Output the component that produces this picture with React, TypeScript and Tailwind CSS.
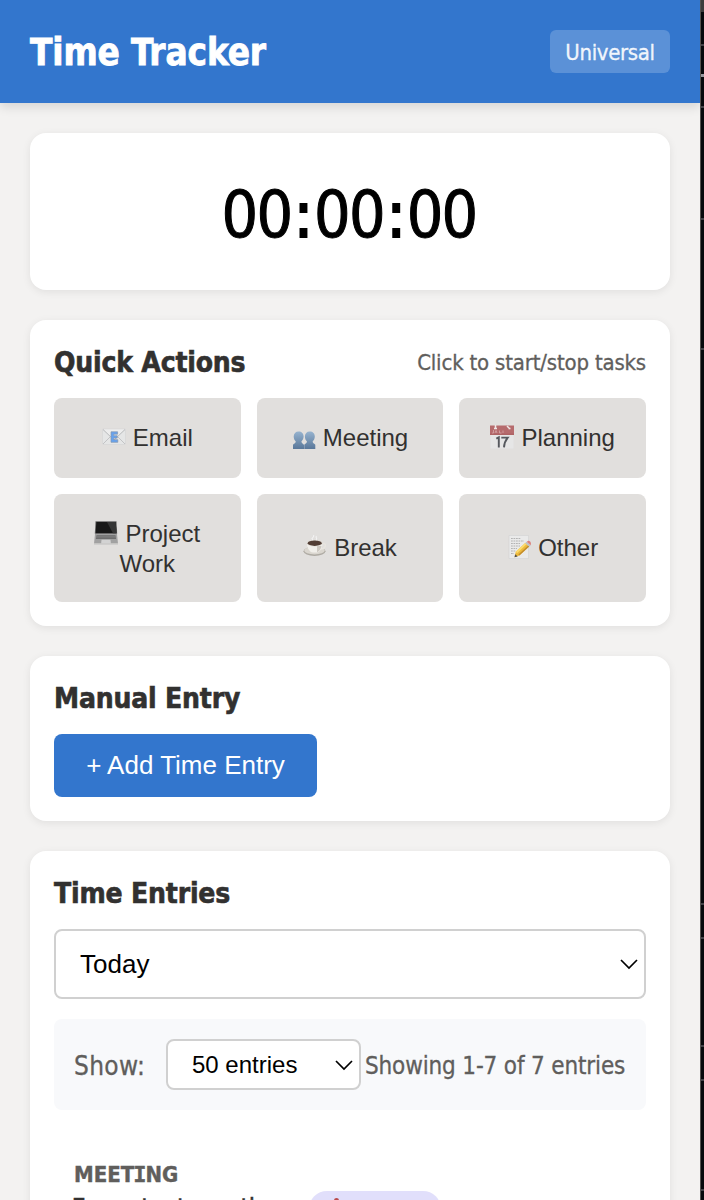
import React from "react";

const UI = "font-['DejaVu_Sans_Condensed','DejaVu_Sans',sans-serif] [font-stretch:condensed]";
const ARIAL = "font-['Liberation_Sans',sans-serif]";

function EmailIcon() {
  return (
    <svg width="24" height="24" viewBox="0 0 24 24">
      <rect x="0.5" y="4" width="23" height="15.5" rx="1" fill="#e6e7e8" stroke="#d3d4d5" strokeWidth=".6" />
      <path d="M1 19 9 11M23 19l-8-8" stroke="#bfc1c3" strokeWidth="1" />
      <path d="M1 4.500 12 15 23 4.500" fill="#efefef" stroke="#b3b5b7" strokeWidth="1" />
      <path d="M9 6.800h6.600v2.400h-3.800v1.500h3.400v2.400h-3.400v1.600h4v2.600H9z" fill="#5a9cf0" stroke="#7d8fa8" strokeWidth=".7" />
    </svg>
  );
}

function PeopleIcon() {
  return (
    <svg width="24" height="24" viewBox="0 0 24 24">
      <defs>
        <linearGradient id="people" x1="0" y1="0" x2="0" y2="1">
          <stop offset="0" stopColor="#8fafce" />
          <stop offset="1" stopColor="#4a6c92" />
        </linearGradient>
      </defs>
      <path
        d="M6.600 6.500c3 0 5 2 5 5 0 2.300-1.200 3.800-2.200 5 .2 2 1.900 2.400 2.600 3.300V24H1v-4.200c.7-1.100 2.500-1.300 2.800-3.300-1.200-1.200-2.100-2.700-2.100-5 0-3 1.900-5 4.900-5zM17.800 6.500c3 0 5 2 5 5 0 2.300-1 3.800-2.200 5 .2 2 2 2.200 2.700 3.300V24H12.300v-4.200c.7-1.100 2.400-1.300 2.700-3.300-1.200-1.200-2.100-2.700-2.100-5 0-3 1.900-5 4.900-5z"
        fill="url(#people)"
      />
    </svg>
  );
}

function CalendarIcon() {
  return (
    <svg width="24" height="24" viewBox="0 0 24 24">
      <path d="M.5 9h23v14.500H.5z" fill="#e7e7e8" />
      <path d="M0 .5h24V10H0z" fill="#b25f61" />
      <path d="M0 9.200h24" stroke="#a55355" strokeWidth="1" />
      <path d="M5.500 0v4M4 3.500h3M17 1l3 3M18.500 3.500h2" stroke="#f3e9e9" strokeWidth="1.500" />
      <path d="M3.500 5v3H2M5 8l1-2.500L7 8M9.500 5.500V8h2M13 5.500V8" stroke="#d6a2a3" strokeWidth=".8" fill="none" />
      <path d="m6.300 13.700 2.500-1.300v10M11.300 12.600h6.400c-2.400 3-3.500 6-3.700 9.800" fill="none" stroke="#484b51" strokeWidth="1.900" />
    </svg>
  );
}

function LaptopIcon() {
  return (
    <svg width="24" height="24" viewBox="0 0 24 24">
      <path d="M1.500.3h21l.7 12.500H.8z" fill="#585858" />
      <path d="M2.300 1h19.500l.6 11.300H1.700z" fill="#030303" />
      <path d="M13 1h8.800l.6 11.300h-3.500z" fill="#232323" />
      <path d="M1 13h22l1 9.500H0z" fill="#9b9b9b" />
      <path d="M2.500 14.300h19l.6 3.600H1.900z" fill="#5c5c5c" />
      <path d="M2.300 15.500h19.400M2.100 16.800h19.800" stroke="#888" strokeWidth=".5" />
      <path d="M7.500 18.700h9l.4 4H7.100z" fill="#d2d2d2" />
      <path d="M0 22.600h24v1H0z" fill="#c4c4c4" />
    </svg>
  );
}

function CoffeeIcon() {
  return (
    <svg width="24" height="24" viewBox="0 0 24 24">
      <ellipse cx="11.500" cy="16.300" rx="11" ry="4.700" fill="#a9a59d" />
      <ellipse cx="11.500" cy="15.500" rx="10.300" ry="3.900" fill="#dad6ce" />
      <path d="M19 8.500c5-1 4.500 5-1 5.600" fill="none" stroke="#e9e6e0" strokeWidth="1.500" />
      <path d="M4 8.200h15.500c0 5.500-3 8.800-5.500 9.300H9.500C7 17 4 13.500 4 8.200z" fill="#f3f1ec" />
      <path d="M14 11h4.500c-.5 3-2 5-4.500 6.300z" fill="#cbc6be" />
      <ellipse cx="11.700" cy="8.200" rx="7.900" ry="3.300" fill="#dedad3" />
      <ellipse cx="11.700" cy="8.200" rx="7" ry="2.700" fill="#432c22" />
      <path d="M10 5c-3-2 2-2.500.5-5M13 5c2-2-1-2 .5-4" fill="none" stroke="#f5f5f5" strokeWidth="1.100" />
    </svg>
  );
}

function MemoIcon() {
  return (
    <svg width="24" height="24" viewBox="0 0 24 24">
      <path d="M2 .5h19.500v23H2z" fill="#ececec" stroke="#d2d2d2" strokeWidth=".6" />
      <path
        d="M4 3.500h10M4 6h13M4 8.500h9M4 11h9M4 13.500h6M4 16h5M4 18.500h3"
        stroke="#a9a9a9"
        strokeWidth=".9"
        strokeDasharray="1.800 .7"
      />
      <path d="m7.500 22.300 1.300-5.500L18.200 8l4 3.500-9.800 9z" fill="#efb72b" />
      <path d="m8.800 16.800 9.400-8.800 1.300 1.200-9.500 9z" fill="#ffdb62" />
      <path d="m12.400 20.500 9.800-9-1-1-9.900 9z" fill="#bf831c" />
      <path d="m18.200 8 1.500-1.300 4 3.500-1.500 1.300z" fill="#b8bec5" />
      <path d="m19.700 6.700 1.200-.8c1.800-.5 3.500 1.500 2.900 3.500l-.1.800z" fill="#dd7771" />
      <path d="m7.500 22.300.7-3 2.500 2.200z" fill="#48433d" />
    </svg>
  );
}

function Chevron() {
  return (
    <svg width="18" height="12" viewBox="0 0 18 12" fill="none">
      <path d="m1 2 8 8 8-8" stroke="#000" strokeWidth="1.700" />
    </svg>
  );
}

const tasks = [
  { label: "Email", Icon: EmailIcon, shift: "" },
  { label: "Meeting", Icon: PeopleIcon, shift: "" },
  { label: "Planning", Icon: CalendarIcon, shift: "" },
  { label: "Project Work", Icon: LaptopIcon, shift: "pt-0.5" },
  { label: "Break", Icon: CoffeeIcon, shift: "" },
  { label: "Other", Icon: MemoIcon, shift: "" },
];

const card = "rounded-2xl bg-white shadow-[0_2px_8px_rgba(0,0,0,0.08)]";
const heading =
  "pt-px text-[28px] leading-9 font-bold tracking-[-0.18px] text-[#323130] whitespace-nowrap [-webkit-text-stroke:0.6px_#323130]";

export default function App() {
  return (
    <div className={`flex h-[1200px] w-[704px] overflow-hidden bg-[#f3f2f1] ${UI}`}>
      <div className="flex w-[700px] shrink-0 flex-col">
        <header className="flex h-[103px] shrink-0 items-center justify-between bg-[#3376cd] px-[30px] shadow-[0_4px_10px_rgba(0,0,0,0.12)]">
          <h1 className="pt-0.5 text-[36.5px] leading-[44px] font-bold tracking-[-0.1px] whitespace-nowrap text-white [-webkit-text-stroke:0.8px_#fff]">
            Time Tracker
          </h1>
          <span className="flex h-[43px] w-[120px] items-center justify-center rounded-md bg-white/20 pt-0.5 text-[22px] tracking-[-0.35px] text-white/90 [-webkit-text-stroke:0.3px_rgba(255,255,255,0.9)]">
            Universal
          </span>
        </header>

        <main className="flex flex-col gap-[30px] p-[30px]">
          <section className={`${card} flex h-[157px] items-center justify-center pt-1.5`}>
            <div className="flex pr-0.5 text-[64px] leading-none tracking-[-1.7px] text-black [-webkit-text-stroke:1px_#000]">
              <span>00</span>
              <span className="mx-[2.5px] [-webkit-text-stroke:2px_#000]">:</span>
              <span>00</span>
              <span className="mx-[2.5px] [-webkit-text-stroke:2px_#000]">:</span>
              <span>00</span>
            </div>
          </section>

          <section className={`${card} h-[306px] px-6 pt-6`}>
            <div className="mb-[18px] flex h-9 items-center justify-between">
              <h2 className={heading}>Quick Actions</h2>
              <span className="text-[22px] tracking-[-0.18px] whitespace-nowrap text-[#605e5c] [-webkit-text-stroke:0.3px_#605e5c]">
                Click to start/stop tasks
              </span>
            </div>
            <div className={`grid grid-cols-3 grid-rows-[80px_108px] gap-4 ${ARIAL}`}>
              {tasks.map(({ label, Icon, shift }) => (
                <button
                  key={label}
                  className={`rounded-lg bg-[#e1dfdd] px-7 text-center text-[24px] leading-[30px] text-[#323130] ${shift}`}
                >
                  <span className="mr-[7px] inline-block h-6 w-6 align-[-3px] opacity-90">
                    <Icon />
                  </span>
                  {label}
                </button>
              ))}
            </div>
          </section>

          <section className={`${card} h-[165px] px-6 pt-6`}>
            <h2 className={`${heading} mb-[17px]`}>Manual Entry</h2>
            <button className={`h-[63px] w-[263px] rounded-lg bg-[#3376cd] text-[26px] whitespace-nowrap text-white ${ARIAL}`}>
              + Add Time Entry
            </button>
          </section>

          <section className={`${card} h-[500px] shrink-0 px-6 pt-6`}>
            <h2 className={`${heading} mb-[17px]`}>Time Entries</h2>
            <div className={`flex h-[70px] items-center justify-between rounded-lg border-2 border-[#d0d0d0] pr-1.5 pl-6 text-[26px] text-black ${ARIAL}`}>
              <span>Today</span>
              <Chevron />
            </div>
            <div className="mt-5 flex h-[91px] items-center rounded-lg bg-[#f8f9fb] px-5 text-[#605e5c]">
              <span className="w-[92px] pt-[3px] text-[26px] tracking-[0.3px] [-webkit-text-stroke:0.3px_#605e5c]">Show:</span>
              <div className={`flex h-[51px] w-[195px] items-center justify-between rounded-lg border-2 border-[#d0d0d0] bg-white pr-1.5 pl-6 text-[24px] text-black ${ARIAL}`}>
                <span>50 entries</span>
                <Chevron />
              </div>
              <span className="ml-1 pt-0.5 text-[24px] tracking-[-0.15px] whitespace-nowrap [-webkit-text-stroke:0.3px_#605e5c]">
                Showing 1-7 of 7 entries
              </span>
            </div>
            <div className="mt-[51px] px-5">
              <div className="text-[22px] leading-[28px] font-bold text-[#605e5c] [-webkit-text-stroke:0.4px_#605e5c]">
                MEET<span className="-mx-px font-['DejaVu_Sans_Mono',monospace]">I</span>NG
              </div>
              <div className="mt-0.5 flex items-start">
                <span className="w-[235px] text-[25px] leading-[34px] tracking-[-0.4px] whitespace-nowrap text-[#323130] [-webkit-text-stroke:0.5px_#323130]">
                  <span className="-mx-[2.5px] font-['DejaVu_Sans_Mono',monospace]">I</span>mportant meeting
                </span>
                <span className="flex h-9 w-[132px] rounded-full bg-[#e1dffb] pt-[7px] pl-[25px]">
                  <svg width="5" height="12" viewBox="0 0 5 12">
                    <circle cx="2.500" cy="2.500" r="2.500" fill="#b94b4b" />
                  </svg>
                </span>
              </div>
            </div>
          </section>
        </main>
      </div>

      <aside className="flex w-1 shrink-0 flex-col border-l border-[#555250] bg-[#07090c]">
        <div className="h-3 bg-[#3d3c3c]" />
        <div className="mt-8 h-0.5 bg-[#424247]" />
        <div className="mt-7 h-[3px] bg-[#96979d]" />
        <div className="mt-[29px] h-0.5 bg-[#424247]" />
        <div className="mt-[110px] h-0.5 bg-[#424247]" />
        <div className="mt-32 h-0.5 bg-[#424247]" />
        <div className="mt-[553px] h-0.5 bg-[#424247]" />
        <div className="mt-8 h-0.5 bg-[#424247]" />
        <div className="mt-[106px] h-0.5 bg-[#424247]" />
        <div className="mt-8 h-0.5 bg-[#424247]" />
        <div className="mt-[108px] h-0.5 bg-[#424247]" />
      </aside>
    </div>
  );
}
